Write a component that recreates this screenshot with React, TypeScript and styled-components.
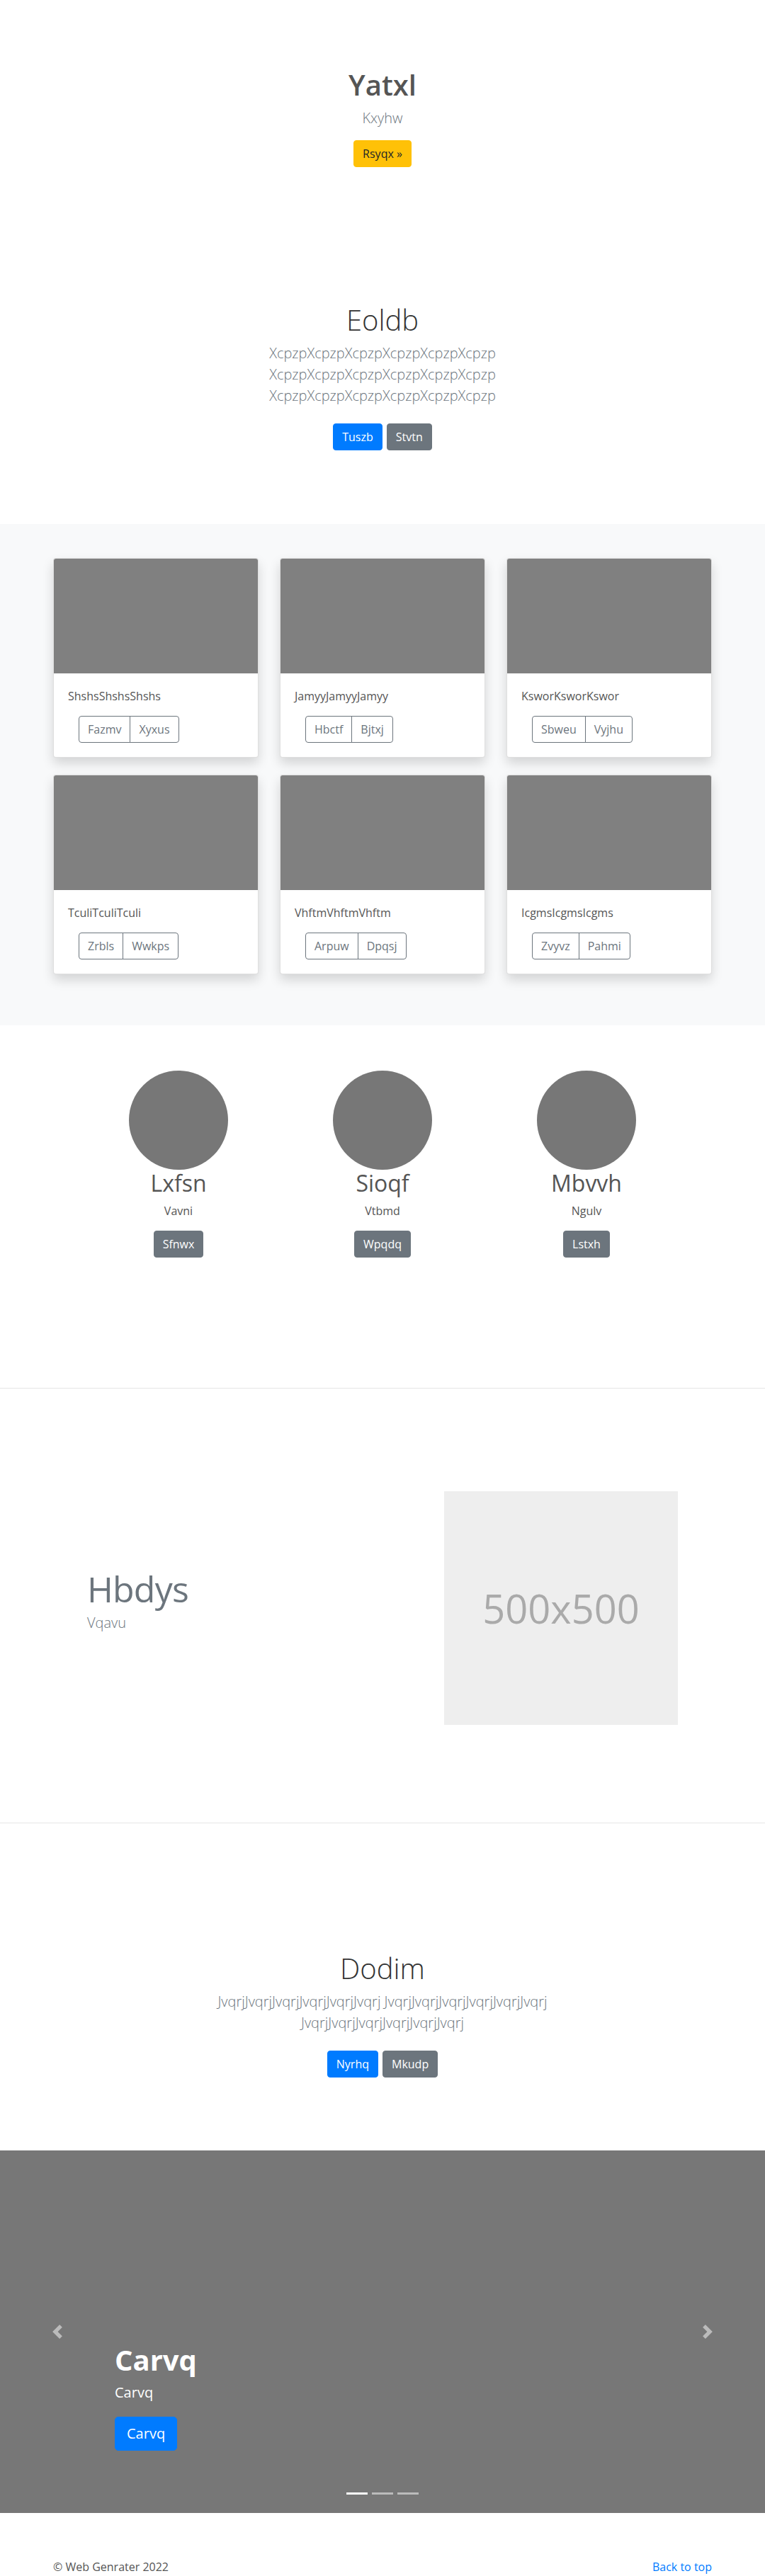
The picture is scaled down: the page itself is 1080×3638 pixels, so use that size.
import React from 'react'
import styled, { createGlobalStyle, css } from 'styled-components'

const GlobalStyle = createGlobalStyle`
  * { box-sizing: border-box; }
  html, body { margin: 0; padding: 0; }
  body {
    font-family: "Open Sans", "Noto Sans", "Liberation Sans", sans-serif;
    font-size: 16px;
    line-height: 1.5;
    color: #555;
    background: #fff;
  }
`

// button colours: [background/border, text]
const palette = {
  primary: ['#007bff', '#fff'],
  secondary: ['#6c757d', '#fff'],
  warning: ['#ffc107', '#212529'],
}
type Variant = keyof typeof palette

const Button = styled.a<{ $variant: Variant; $lg?: boolean }>`
  display: inline-block;
  padding: 6px 12px;
  font-size: 16px;
  line-height: 24px;
  font-weight: 400;
  border-radius: 4px;
  text-decoration: none;
  cursor: pointer;
  background: ${(p) => palette[p.$variant][0]};
  border: 1px solid ${(p) => palette[p.$variant][0]};
  color: ${(p) => palette[p.$variant][1]};
  ${(p) =>
    p.$lg &&
    css`
      padding: 8px 16px;
      font-size: 20px;
      line-height: 30px;
      border-radius: 5px;
    `}
`

// padding (not margin) so it doesn't collapse with the paragraph above
const ButtonRow = styled.div<{ $pad?: number }>`
  display: flex;
  justify-content: center;
  gap: 6px;
  padding: ${(p) => p.$pad ?? 8}px 0;
`

/* ---------- hero ---------- */
const Hero = styled.section<{ $top?: number; $bottom?: number }>`
  padding: ${(p) => p.$top ?? 96}px 15px ${(p) => p.$bottom ?? 96}px;
  text-align: center;
`

const HeroTitle = styled.h1<{ $light?: boolean }>`
  margin: 0 0 8px;
  font-size: 40px;
  line-height: 48px;
  font-weight: ${(p) => (p.$light ? 300 : 600)};
  color: ${(p) => (p.$light ? '#333' : '#555')};
`

const Lead = styled.p<{ $width?: number }>`
  margin: 0 auto 16px;
  max-width: ${(p) => p.$width ?? 1000}px;
  font-size: 20px;
  line-height: 30px;
  font-weight: 300;
  color: #6c757d;
`

/* ---------- album ---------- */
const Album = styled.section`
  background: #f8f9fa;
  padding: 48px 0;
`

const CardGrid = styled.div`
  width: 930px;
  margin: 0 auto;
  display: grid;
  grid-template-columns: repeat(3, 1fr);
  column-gap: 30px;
  row-gap: 24px;
  padding-bottom: 24px;
`

const Card = styled.div`
  background: #fff;
  border: 1px solid rgba(0, 0, 0, 0.125);
  border-radius: 4px;
  box-shadow: 0 8px 16px rgba(0, 0, 0, 0.15);
  overflow: hidden;
`

const Thumb = styled.div`
  height: 162px;
  background: #808080;
`

const CardBody = styled.div`
  padding: 20px;
`

const CardText = styled.p`
  margin: 0 0 16px;
  color: #555;
`

const BtnGroup = styled.div`
  display: inline-flex;
  margin-left: 15px;
`

const OutlineBtn = styled.button`
  font-family: inherit;
  padding: 6px 12px;
  font-size: 16px;
  line-height: 24px;
  color: #6c757d;
  background: transparent;
  border: 1px solid #6c757d;
  &:first-child {
    border-radius: 4px 0 0 4px;
  }
  &:last-child {
    border-radius: 0 4px 4px 0;
    margin-left: -1px;
  }
`

/* ---------- marketing ---------- */
const Marketing = styled.section`
  width: 864px;
  margin: 0 auto;
  padding: 64px 0 184px;
  display: grid;
  grid-template-columns: repeat(3, 1fr);
`

const Person = styled.div`
  display: flex;
  flex-direction: column;
  align-items: center;
  text-align: center;
`

const Avatar = styled.div`
  width: 140px;
  height: 140px;
  border-radius: 50%;
  background: #777;
`

const PersonName = styled.h2`
  margin: 0 0 8px;
  font-size: 32px;
  line-height: 38px;
  font-weight: 400;
  color: #555;
`

const PersonText = styled.p`
  margin: 0 0 16px;
  color: #555;
`

const Divider = styled.hr`
  margin: 0;
  border: 0;
  border-top: 1px solid #e5e5e5;
`

/* ---------- featurette ---------- */
const Featurette = styled.section`
  width: 864px;
  margin: 0 auto;
  padding: 145px 0 138px;
  display: grid;
  grid-template-columns: 7fr 5fr;
  align-items: center;
`

const FeatureCol = styled.div`
  padding: 0 15px;
`

const FeatureHeading = styled.h2`
  margin: 0 0 8px;
  font-size: 50px;
  line-height: 1;
  font-weight: 400;
  letter-spacing: -0.8px;
  color: #6c757d;
`

const FeatureLead = styled.p`
  margin: 0 0 16px;
  font-size: 20px;
  line-height: 30px;
  font-weight: 300;
  color: #6c757d;
`

const Placeholder = styled.div`
  width: 100%;
  aspect-ratio: 1 / 1;
  background: #eee;
  color: #aaa;
  font-size: 56px;
  display: flex;
  align-items: center;
  justify-content: center;
`

/* ---------- carousel ---------- */
const Carousel = styled.section`
  position: relative;
  height: 512px;
  background: #777;
  display: flex;
  align-items: flex-end;
  padding: 0 15% 68px;
`

const Caption = styled.div`
  color: #fff;
  padding: 20px 0;
`

const CaptionTitle = styled.h1`
  margin: 0 0 8px;
  font-size: 40px;
  line-height: 48px;
  font-weight: 700;
`

const CaptionText = styled.p`
  margin: 0 0 20px;
  font-size: 20px;
  line-height: 28px;
`

const Control = styled.a<{ $side: 'left' | 'right' }>`
  position: absolute;
  top: 0;
  bottom: 0;
  ${(p) => p.$side}: 0;
  width: 15%;
  display: flex;
  align-items: center;
  justify-content: center;
  opacity: 0.5;
`

const Indicators = styled.ol`
  position: absolute;
  left: 0;
  right: 0;
  bottom: 16px;
  margin: 0;
  padding: 0;
  list-style: none;
  display: flex;
  justify-content: center;
`

const Indicator = styled.li<{ $active?: boolean }>`
  width: 30px;
  height: 3px;
  margin: 10px 3px;
  background: #fff;
  opacity: ${(p) => (p.$active ? 1 : 0.5)};
`

/* ---------- footer ---------- */
const Footer = styled.footer`
  width: 930px;
  margin: 0 auto;
  padding-top: 64px;
  display: flex;
  justify-content: space-between;
  line-height: 24px;
  color: #555;
`

const FooterLink = styled.a`
  color: #007bff;
  text-decoration: none;
`

const cards = [
  ['ShshsShshsShshs', 'Fazmv', 'Xyxus'],
  ['JamyyJamyyJamyy', 'Hbctf', 'Bjtxj'],
  ['KsworKsworKswor', 'Sbweu', 'Vyjhu'],
  ['TculiTculiTculi', 'Zrbls', 'Wwkps'],
  ['VhftmVhftmVhftm', 'Arpuw', 'Dpqsj'],
  ['IcgmsIcgmsIcgms', 'Zvyvz', 'Pahmi'],
]

const people = [
  ['Lxfsn', 'Vavni', 'Sfnwx'],
  ['Sioqf', 'Vtbmd', 'Wpqdq'],
  ['Mbvvh', 'Ngulv', 'Lstxh'],
]

const Chevron = ({ flip }: { flip?: boolean }) => (
  <svg width="20" height="20" viewBox="0 0 8 8" fill="#fff" style={flip ? { transform: 'scaleX(-1)' } : undefined}>
    <path d="M5.25 0l-4 4 4 4 1.5-1.5L4.25 4l2.5-2.5L5.25 0z" />
  </svg>
)

export default function App() {
  const x = 'Xcpzp'.repeat(6)
  const j = 'Jvqrj'.repeat(6)
  return (
    <>
      <GlobalStyle />

      <Hero>
        <HeroTitle>Yatxl</HeroTitle>
        <Lead>Kxyhw</Lead>
        <ButtonRow $pad={0}>
          <Button $variant="warning">Rsyqx »</Button>
        </ButtonRow>
      </Hero>

      <Hero>
        <HeroTitle $light>Eoldb</HeroTitle>
        <Lead $width={610}>{`${x} ${x} ${x}`}</Lead>
        <ButtonRow>
          <Button $variant="primary">Tuszb</Button>
          <Button $variant="secondary">Stvtn</Button>
        </ButtonRow>
      </Hero>

      <Album>
        <CardGrid>
          {cards.map(([title, a, b]) => (
            <Card key={title}>
              <Thumb />
              <CardBody>
                <CardText>{title}</CardText>
                <BtnGroup>
                  <OutlineBtn>{a}</OutlineBtn>
                  <OutlineBtn>{b}</OutlineBtn>
                </BtnGroup>
              </CardBody>
            </Card>
          ))}
        </CardGrid>
      </Album>

      <Marketing>
        {people.map(([name, sub, btn]) => (
          <Person key={name}>
            <Avatar />
            <PersonName>{name}</PersonName>
            <PersonText>{sub}</PersonText>
            <Button $variant="secondary">{btn}</Button>
          </Person>
        ))}
      </Marketing>

      <Divider />

      <Featurette>
        <FeatureCol>
          <FeatureHeading>Hbdys</FeatureHeading>
          <FeatureLead>Vqavu</FeatureLead>
        </FeatureCol>
        <FeatureCol>
          <Placeholder>500x500</Placeholder>
        </FeatureCol>
      </Featurette>

      <Divider />

      <Hero $top={181} $bottom={95}>
        <HeroTitle $light>Dodim</HeroTitle>
        <Lead $width={610}>{`${j} ${j} ${j}`}</Lead>
        <ButtonRow>
          <Button $variant="primary">Nyrhq</Button>
          <Button $variant="secondary">Mkudp</Button>
        </ButtonRow>
      </Hero>

      <Carousel>
        <Indicators>
          <Indicator $active />
          <Indicator />
          <Indicator />
        </Indicators>
        <Caption>
          <CaptionTitle>Carvq</CaptionTitle>
          <CaptionText>Carvq</CaptionText>
          <Button $variant="primary" $lg>
            Carvq
          </Button>
        </Caption>
        <Control $side="left">
          <Chevron />
        </Control>
        <Control $side="right">
          <Chevron flip />
        </Control>
      </Carousel>

      <Footer>
        <span>© Web Genrater 2022</span>
        <FooterLink href="#">Back to top</FooterLink>
      </Footer>
    </>
  )
}
